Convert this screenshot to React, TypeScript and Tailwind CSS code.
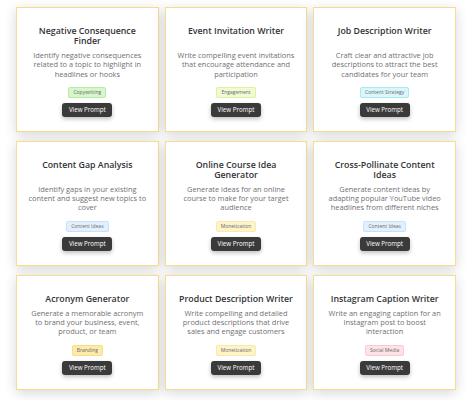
import React from 'react';

type Prompt = {
  title: string;
  description: string;
  tag: string;
  tagClass: string;
};

const prompts: Prompt[] = [
  {
    title: 'Negative Consequence Finder',
    description: 'Identify negative consequences related to a topic to highlight in headlines or hooks',
    tag: 'Copywriting',
    tagClass: 'bg-[#d6f6cb] border-[#b9eaa6]',
  },
  {
    title: 'Event Invitation Writer',
    description: 'Write compelling event invitations that encourage attendance and participation',
    tag: 'Engagement',
    tagClass: 'bg-[#f0fbd3] border-[#dbf3a3]',
  },
  {
    title: 'Job Description Writer',
    description: 'Craft clear and attractive job descriptions to attract the best candidates for your team',
    tag: 'Content Strategy',
    tagClass: 'bg-[#d9f6fb] border-[#a8e9f5]',
  },
  {
    title: 'Content Gap Analysis',
    description: 'Identify gaps in your existing content and suggest new topics to cover',
    tag: 'Content Ideas',
    tagClass: 'bg-[#e3f0fe] border-[#c9e0fa]',
  },
  {
    title: 'Online Course Idea Generator',
    description: 'Generate ideas for an online course to make for your target audience',
    tag: 'Monetization',
    tagClass: 'bg-[#fdf4cb] border-[#fbe9a6]',
  },
  {
    title: 'Cross-Pollinate Content Ideas',
    description: 'Generate content ideas by adapting popular YouTube video headlines from different niches',
    tag: 'Content Ideas',
    tagClass: 'bg-[#e3f0fe] border-[#c9e0fa]',
  },
  {
    title: 'Acronym Generator',
    description: 'Generate a memorable acronym to brand your business, event, product, or team',
    tag: 'Branding',
    tagClass: 'bg-[#fdebae] border-[#f9de86]',
  },
  {
    title: 'Product Description Writer',
    description: 'Write compelling and detailed product descriptions that drive sales and engage customers',
    tag: 'Monetization',
    tagClass: 'bg-[#fdf4cb] border-[#fbe9a6]',
  },
  {
    title: 'Instagram Caption Writer',
    description: 'Write an engaging caption for an Instagram post to boost interaction',
    tag: 'Social Media',
    tagClass: 'bg-[#fde2e8] border-[#fbcad5]',
  },
];

function PromptCard({ prompt }: { prompt: Prompt }) {
  return (
    <div className="flex flex-col items-center border border-[#f8dc8e] bg-white px-[10px] pt-[18px] pb-[14px] text-center shadow-[0_3px_12px_rgba(0,0,0,0.16)]">
      <div className="flex-1">
        <h3 className="text-[8.8px] font-semibold leading-[10px] text-[#333338]">{prompt.title}</h3>
      </div>
      <p className="mt-[5px] text-[7.4px] leading-[9.3px] text-[#707075]">{prompt.description}</p>
      <span
        className={`mt-[8px] rounded-[2px] border px-[4px] text-[5px] leading-[9px] text-[#6a6a6a] ${prompt.tagClass}`}
      >
        {prompt.tag}
      </span>
      <button className="mt-[5px] h-[14px] w-[50px] rounded-[3px] bg-[#3a3a3a] text-[6.2px] text-white shadow-[0_2px_4px_rgba(0,0,0,0.25)]">
        View Prompt
      </button>
    </div>
  );
}

export default function App() {
  return (
    <div
      className="min-h-[400px] bg-white pt-[7px] pl-[16px] pr-[12px]"
      style={{ fontFamily: '"Open Sans", "Noto Sans", sans-serif' }}
    >
      <div className="grid grid-cols-3 gap-x-[6px] gap-y-[9px]">
        {prompts.map((p) => (
          <PromptCard key={p.title} prompt={p} />
        ))}
      </div>
    </div>
  );
}
